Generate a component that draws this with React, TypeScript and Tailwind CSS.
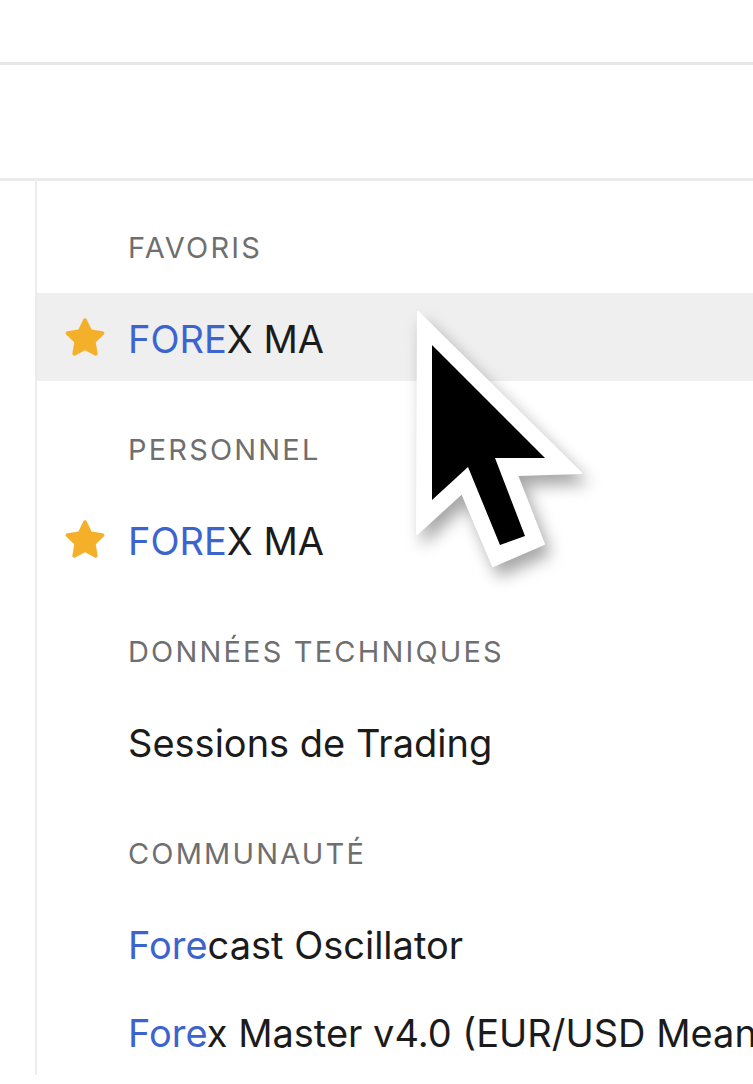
import React from "react";

const font = { fontFamily: "Inter, 'Noto Sans', sans-serif" };

function Star() {
  return (
    <svg width="44" height="42" viewBox="0 0 24 23" className="shrink-0">
      <path
        d="M12 1.2c.4 0 .7.2.9.6l2.7 5.6 6.1.9c.9.1 1.2 1.2.6 1.8l-4.4 4.3 1 6.1c.2.9-.8 1.5-1.5 1.1L12 18.7l-5.4 2.9c-.8.4-1.7-.2-1.5-1.1l1-6.1-4.4-4.3c-.6-.6-.3-1.7.6-1.8l6.1-.9 2.7-5.6c.2-.4.5-.6.9-.6z"
        fill="#f5b02a"
      />
    </svg>
  );
}

function Label({ children, first }: { children: React.ReactNode; first?: boolean }) {
  return (
    <div
      className={`${first ? "h-[112px] pt-[52px]" : "h-[114px] pt-[54px]"} pl-[91px] text-[29px] leading-[30px] tracking-[0.075em] text-[#6f6f6f] whitespace-nowrap`}
    >
      {children}
    </div>
  );
}

function Item({
  star,
  hl,
  highlight,
  rest,
}: {
  star?: boolean;
  hl?: boolean;
  highlight: string;
  rest: string;
}) {
  return (
    <div className={`h-[88px] flex items-center overflow-hidden ${hl ? "bg-[#efefef]" : ""}`}>
      <div className="w-[91px] shrink-0 flex justify-center pl-[4px]">{star ? <Star /> : null}</div>
      <div className="text-[38px] leading-[44px] pt-[4px] text-[#1b1b1b] whitespace-nowrap">
        <span className="text-[#3c64cf]">{highlight}</span>
        {rest}
      </div>
    </div>
  );
}

function Cursor() {
  return (
    <svg
      className="absolute left-0 top-0 pointer-events-none"
      width="753"
      height="1084"
      viewBox="0 0 753 1084"
      style={{ filter: "drop-shadow(6px 10px 8px rgba(0,0,0,0.35))" }}
    >
      <path
        d="M418 312 L417 534 L462 493 L493 566 L544 544 L517 475 L581 473 Z"
        fill="#ffffff"
        stroke="#ffffff"
        strokeWidth="2"
        strokeLinejoin="round"
      />
      <path d="M432 345 L432 500 L468 467 L500 545 L525 536 L495 458 L545 458 Z" fill="#000000" />
    </svg>
  );
}

export default function App() {
  return (
    <div className="relative w-[753px] h-[1084px] bg-white overflow-hidden" style={font}>
      <div className="h-[62px]" />
      <div className="h-[3px] bg-[#e8e8e8]" />
      <div className="h-[113px]" />
      <div className="h-[3px] bg-[#ebebeb]" />
      <div className="flex">
        <div className="w-[35px] shrink-0" />
        <div className="w-[2px] shrink-0 bg-[#ececec] self-stretch" />
        <div className="flex-1 flex flex-col min-w-0 overflow-hidden">
          <Label first>FAVORIS</Label>
          <Item star hl highlight="FORE" rest="X MA" />
          <Label>PERSONNEL</Label>
          <Item star highlight="FORE" rest="X MA" />
          <Label>DONNÉES TECHNIQUES</Label>
          <Item highlight="" rest="Sessions de Trading" />
          <Label>COMMUNAUTÉ</Label>
          <Item highlight="Fore" rest="cast Oscillator" />
          <Item highlight="Fore" rest="x Master v4.0 (EUR/USD Mean" />
        </div>
      </div>
      <Cursor />
    </div>
  );
}
